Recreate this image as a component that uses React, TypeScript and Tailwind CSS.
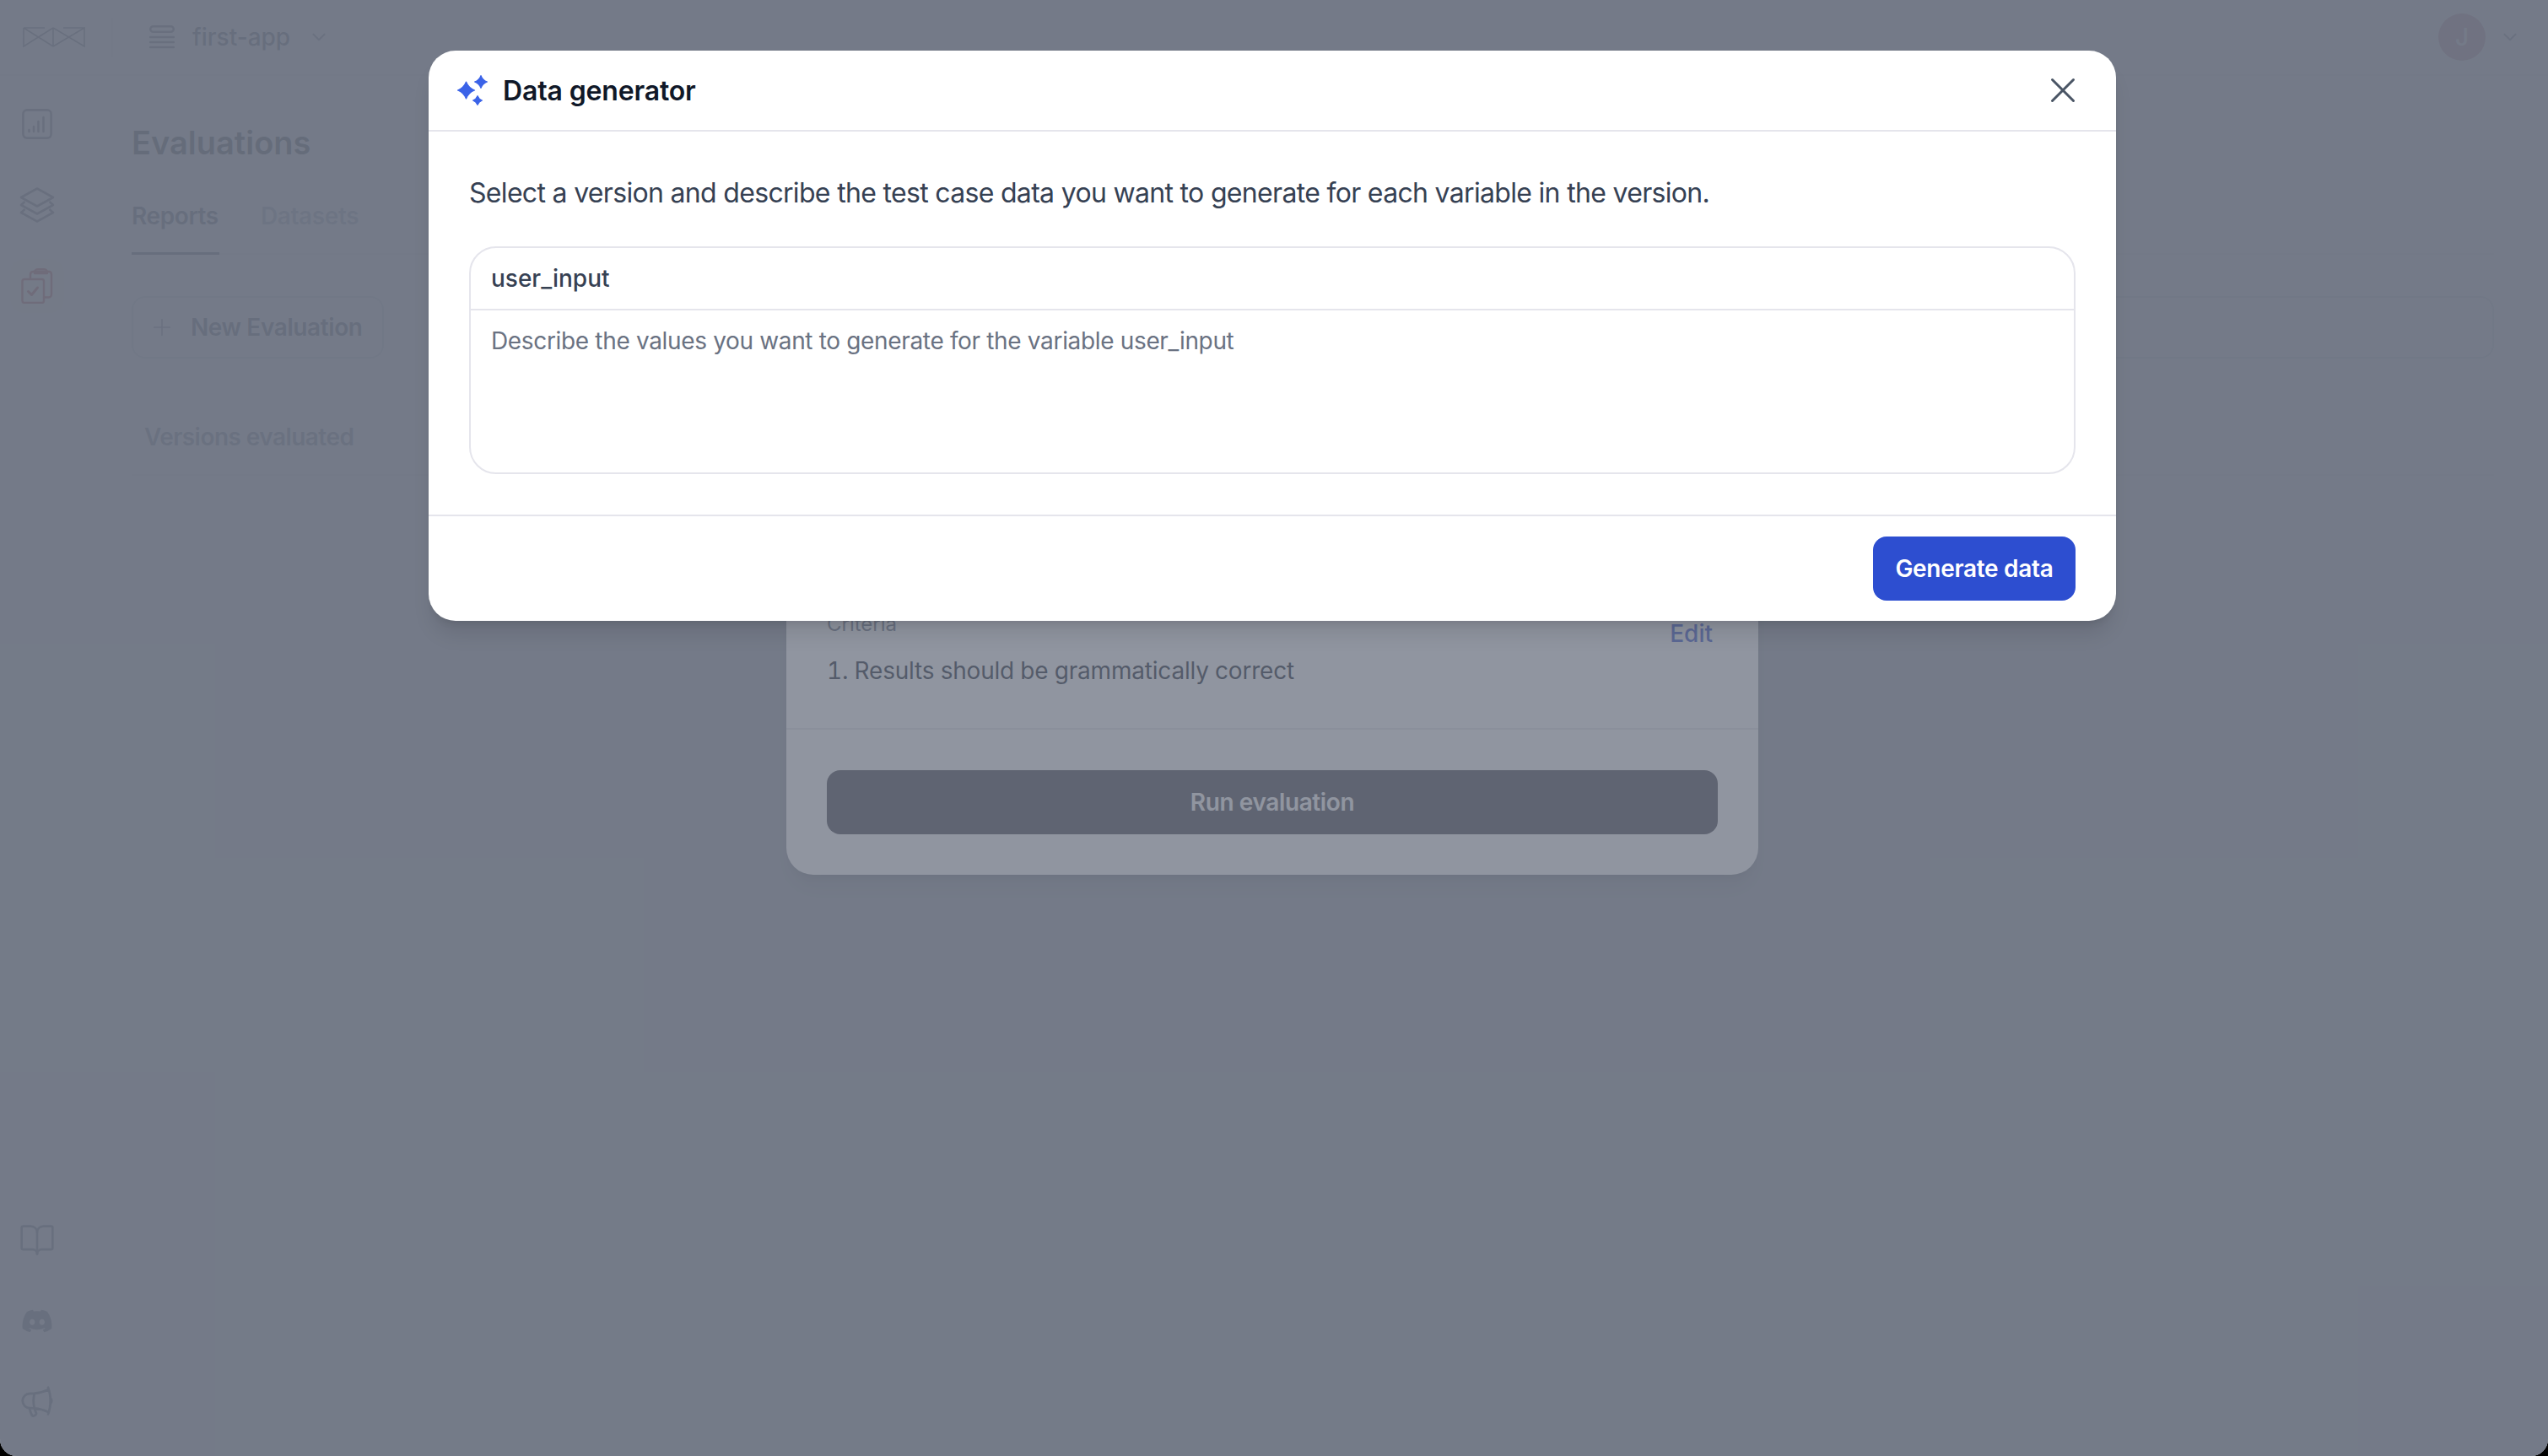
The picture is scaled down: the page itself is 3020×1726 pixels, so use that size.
import { BookOpen, ChevronDown, Plus, X } from "lucide-react";
import { FaDiscord } from "react-icons/fa";
import { HiOutlineMegaphone } from "react-icons/hi2";

function Logo() {
  return (
    <svg width="74" height="24" viewBox="0 0 74 24" fill="none" stroke="#4b5563" strokeWidth="1.6">
      <path d="M1 1V23L36 1M1 1L36 23M1 1H26M36 1V23M36 1L73 23V1L36 23M48 1H73" />
    </svg>
  );
}

function AppStackIcon() {
  return (
    <svg width="30" height="28" viewBox="0 0 30 28" fill="none" stroke="#4b5563" strokeWidth="2.4" strokeLinecap="round">
      <rect x="1.2" y="1.2" width="27.6" height="6.6" rx="3.3" />
      <path d="M1 14H29M1 20H29M1 26H29" />
    </svg>
  );
}

function ChartIcon() {
  return (
    <svg width="36" height="36" viewBox="0 0 36 36" fill="none" stroke="#4b5563" strokeWidth="2.6" strokeLinecap="round">
      <rect x="1.4" y="1.4" width="33.2" height="33.2" rx="4.5" />
      <path d="M8.5 27V25M14 27V21M19.5 27V15M25.5 27V10" />
    </svg>
  );
}

function LayersIcon() {
  return (
    <svg width="42" height="42" viewBox="0 0 42 42" fill="none" stroke="#4b5563" strokeWidth="2.6" strokeLinejoin="round">
      <path d="M21 1.5L40 12L21 22.5L2 12Z" />
      <path d="M6.5 17L2 21L21 31.5L40 21L35.5 17" />
      <path d="M6.5 26L2 30L21 40.5L40 30L35.5 26" />
    </svg>
  );
}

function ClipboardIcon() {
  return (
    <svg width="38" height="42" viewBox="0 0 38 42" fill="none" stroke="#b91c1c" strokeWidth="2.4" strokeLinecap="round" strokeLinejoin="round">
      <path d="M11 12V7.5C11 5.5 12.5 4 14.5 4H33C35 4 36 5.5 36 7.5V31C36 33 34.5 34.5 33 34.5H27" />
      <path d="M16 4.5C16 2.5 18 1.2 20 1.2H27C29 1.2 31 2.5 31 4.5V6H16Z" />
      <rect x="1.5" y="13" width="25.5" height="28" rx="2.5" />
      <path d="M8.5 27.5L12.5 31.5L19.5 23" strokeWidth="3" />
    </svg>
  );
}

function SparklesIcon() {
  return (
    <svg width="36" height="36" viewBox="0 0 36 36" fill="#3b63e8" stroke="#3b63e8" strokeWidth="1.2" strokeLinejoin="round">
      <path d="M10.5 8Q13.3 15.2 20.5 18Q13.3 20.8 10.5 28Q7.7 20.8 0.5 18Q7.7 15.2 10.5 8Z" />
      <path d="M28 0.6Q30 6 35.4 8Q30 10 28 15.4Q26 10 20.6 8Q26 6 28 0.6Z" />
      <path d="M24 24.6Q25.5 28.5 29.4 30Q25.5 31.5 24 35.4Q22.5 31.5 18.6 30Q22.5 28.5 24 24.6Z" />
    </svg>
  );
}

function SideIcon({ children, active }: { children: React.ReactNode; active?: boolean }) {
  return (
    <div className={`flex h-16 w-16 items-center justify-center rounded-2xl ${active ? "bg-red-50" : ""}`}>
      {children}
    </div>
  );
}

export default function App() {
  return (
    <div className="relative h-[1726px] w-full overflow-hidden bg-black font-['Inter',sans-serif]">
      {/* Page behind the dialogs */}
      <div className="flex h-full w-full flex-col rounded-b-[20px] bg-white">
        <header className="flex h-[90px] shrink-0 items-center border-b-2 border-gray-200">
          <div className="flex h-[46px] w-[134px] items-center border-r-2 border-gray-200 pl-[27px]">
            <Logo />
          </div>
          <div className="ml-[43px] flex items-center">
            <AppStackIcon />
            <span className="ml-[21px] text-[28px] leading-10 font-medium text-gray-700">first-app</span>
            <ChevronDown size={26} strokeWidth={2} className="ml-[21px] text-gray-500" />
          </div>
          <div className="ml-auto flex items-center pr-[32px]">
            <div className="flex h-14 w-14 items-center justify-center rounded-full bg-[#c08088] text-[28px] font-medium text-white">J</div>
            <ChevronDown size={26} strokeWidth={2} className="ml-[16px] text-gray-500" />
          </div>
        </header>

        <div className="flex min-h-0 flex-1">
          <aside className="flex w-[156px] shrink-0 flex-col justify-between pt-[25px] pb-[32px] pl-3">
            <nav className="flex flex-col gap-8">
              <SideIcon><ChartIcon /></SideIcon>
              <SideIcon><LayersIcon /></SideIcon>
              <SideIcon active><ClipboardIcon /></SideIcon>
            </nav>
            <div className="flex flex-col gap-8">
              <SideIcon><BookOpen size={44} strokeWidth={1.5} className="text-gray-600" /></SideIcon>
              <SideIcon><FaDiscord size={38} className="text-gray-600" /></SideIcon>
              <SideIcon><HiOutlineMegaphone size={46} className="text-gray-600" /></SideIcon>
            </div>
          </aside>

          <main className="min-w-0 flex-1 pt-[55px] pr-[64px]">
            <h1 className="text-[38px] leading-[48px] font-semibold text-gray-900">Evaluations</h1>
            <div className="mt-[43px] flex gap-[49px] border-b-2 border-gray-200">
              <div className="-mb-[2px] w-[104px] border-b-[3px] border-gray-700 pb-[23px] text-[28px] leading-10 font-semibold tracking-[-0.4px] text-gray-700">Reports</div>
              <div className="text-[28px] leading-10 font-semibold tracking-[-0.4px] text-gray-400">Datasets</div>
            </div>
            <div className="mt-[49px] flex items-center justify-between">
              <button className="flex h-[74px] w-[299px] items-center rounded-2xl border-2 border-gray-300 pl-[18px] text-[28px] font-semibold tracking-[-0.4px] text-gray-700">
                <Plus size={32} strokeWidth={1.3} className="text-gray-500" />
                <span className="ml-[18px]">New Evaluation</span>
              </button>
              <div className="h-[74px] w-[1000px] rounded-2xl border-2 border-gray-300" />
            </div>
            <div className="mt-[73px] border-b-2 border-gray-200 pb-[24px] pl-[15px] text-[28px] leading-10 font-semibold tracking-[-0.55px] text-gray-500">
              Versions evaluated
            </div>
          </main>
        </div>
      </div>

      {/* First dialog, with its backdrop */}
      <div className="absolute inset-0 flex justify-center rounded-b-[20px] bg-[#6b7280]/75 pr-1 pt-[60px]">
        <div className="flex h-[977px] w-[1152px] flex-col justify-end rounded-[32px] bg-white shadow-xl">
          <div className="border-b-2 border-gray-200 px-12 pb-[48px]">
            <div className="flex items-start justify-between">
              <span className="mt-[4px] text-[24px] leading-8 text-gray-500">Criteria</span>
              <span className="mt-[11px] mr-[6px] text-[28px] leading-10 font-medium text-[#2d4ed0]">Edit</span>
            </div>
            <p className="mt-[4px] text-[28px] leading-10 tracking-[-0.2px] text-gray-900 tabular-nums">1. Results should be grammatically correct</p>
          </div>
          <div className="p-12">
            <button className="h-[76px] w-full rounded-2xl bg-[#3f3e48] text-[28px] font-semibold tracking-[-0.4px] text-white">Run evaluation</button>
          </div>
        </div>
      </div>

      {/* Data generator dialog, with its backdrop */}
      <div className="absolute inset-0 flex items-start justify-center rounded-b-[20px] bg-[#6b7280]/75 pr-1 pt-[60px]">
        <div className="w-[2000px] rounded-[32px] bg-white shadow-xl">
          <div className="flex h-[96px] items-center border-b-2 border-[#e5e5ec] pr-[38px] pl-[34px]">
            <SparklesIcon />
            <h2 className="mt-[1px] ml-[18px] text-[32px] leading-10 font-semibold tracking-[-0.15px] text-gray-900">Data generator</h2>
            <X size={50} strokeWidth={1.45} className="ml-auto text-gray-600" />
          </div>
          <div className="px-12 pt-[49px] pb-12">
            <p className="text-[32px] leading-12 tracking-[-0.68px] text-gray-700">
              Select a version and describe the test case data you want to generate for each variable in the version.
            </p>
            <div className="mt-[39px] rounded-[32px] border-2 border-[#e5e5ec]">
              <div className="flex h-[74px] items-center border-b-2 border-[#e5e5ec] px-6 text-[28px] font-medium text-gray-700">user_input</div>
              <div className="h-[192px] px-6 pt-[16px] text-[28px] leading-10 tracking-[-0.34px] text-gray-500">
                Describe the values you want to generate for the variable user_input
              </div>
            </div>
          </div>
          <div className="flex justify-end border-t-2 border-[#e5e5ec] px-12 py-6">
            <button className="h-[76px] w-[240px] rounded-2xl bg-[#2d4ed0] text-[28px] font-semibold tracking-[-0.3px] text-white">Generate data</button>
          </div>
        </div>
      </div>
    </div>
  );
}
